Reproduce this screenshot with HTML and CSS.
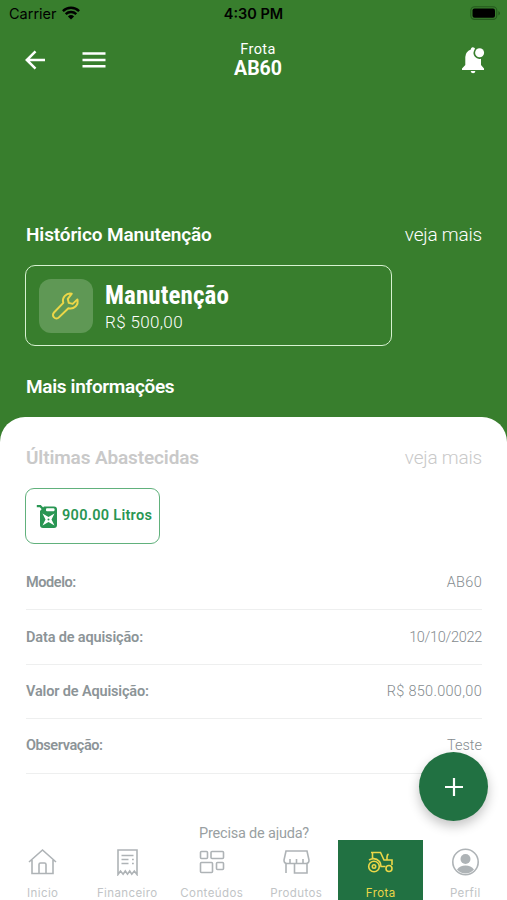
FILE: index.html
```html
<!DOCTYPE html>
<html lang="pt-BR">
<head>
<meta charset="utf-8">
<meta name="viewport" content="width=device-width, initial-scale=1">
<title>Frota AB60</title>
<link rel="stylesheet" href="styles.css">
</head>
<body>
<div class="app">
  <div class="status">
    <div class="carrier"><span>Carrier</span>
      <svg width="18" height="14" viewBox="0 0 18 14"><g fill="none" stroke="#000" stroke-width="2.4"><path d="M.9 5.1a11.6 11.6 0 0 1 16.2 0"/><path d="M3.7 8.2a7.6 7.6 0 0 1 10.6 0"/></g><path d="M9 13.6 5.9 10.400a4.500 4.500 0 0 1 6.200 0Z"/></svg>
    </div>
    <div class="clock">4:30 PM</div>
    <svg class="battery" width="31" height="15" viewBox="0 0 31 15"><rect x=".8" y=".8" width="26" height="12.600" rx="3.800" fill="none" stroke="#245a1d" stroke-width="1.100"/><rect x="2.500" y="2.500" width="22.500" height="9.200" rx="2"/><path d="M28.400 5v4.500q1.600-.6 1.600-2.200t-1.600-2.300Z" fill="#245a1d"/></svg>
  </div>
  <header class="header">
    <div class="left">
      <svg width="22" height="22" viewBox="0 0 22 22" fill="none" stroke="#fff" stroke-width="2.500"><path d="M21 11H3M11.500 2.300 2.800 11l8.700 8.700"/></svg>
      <svg width="24" height="18" viewBox="0 0 24 18" stroke="#fff" stroke-width="2.600"><path d="M.5 2.500h23M.5 9h23M.5 15.300h23"/></svg>
    </div>
    <div class="title"><p class="t-small">Frota</p><p class="t-big">AB60</p></div>
    <svg class="bell" width="24" height="28" viewBox="0 0 24 28" fill="#fff"><path d="M11.500 1.200q-1.700.2-1.700 2.300Q4.500 5.500 4.300 11v8L1 22.500V24h22v-1.500L20 19v-6.300a5.900 5.900 0 0 1-6.900-8.200q.4-1 1-1.700-.6-1.800-2.600-1.600Z"/><circle cx="18.600" cy="6.800" r="4.500"/><path d="M9.700 25h4.700q-.2 2.200-2.300 2.200T9.700 25Z"/></svg>
  </header>
  <section class="history">
    <div class="section-head"><h2>Histórico Manutenção</h2><a class="more">veja mais</a></div>
    <div class="card">
      <div class="tile"><svg width="30" height="30" viewBox="0 0 30 30" fill="none" stroke="#ecd748" stroke-width="2" stroke-linejoin="round"><path d="M20.800 2.700a7.200 7.200 0 0 0-8.500 9.200L3 21.500a3.400 3.400 0 0 0 4.900 4.900l9.500-9.200a7.200 7.200 0 0 0 9-8.800l-4.700 4.500-3.900-1-1-4Z"/></svg></div>
      <div><p class="card-title">Manutenção</p><p class="card-value">R$ 500,00</p></div>
    </div>
    <h2 class="info">Mais informações</h2>
  </section>
  <main class="sheet">
    <div class="section-head muted"><h2>Últimas Abastecidas</h2><a class="more">veja mais</a></div>
    <div class="fuel">
      <svg width="22" height="25" viewBox="0 0 22 25"><path d="M.8 2.200h3.500l4 4" fill="none" stroke="#299653" stroke-width="2.200"/><path d="M8 2.500h10q3 0 3 3V21q0 3-3 3H7q-3 0-3-3V7Z" fill="#299653"/><rect x="10" y="4.300" width="8.500" height="3" rx="1" fill="#fff"/><path d="M6.500 9.500 12.500 13l6-3.500-3 6 3 6-6-3.500-6 3.500 3-6Z" fill="#fff"/><circle cx="12.500" cy="15.500" r="1" fill="#299653"/></svg>
      <span>900.00 Litros</span>
    </div>
    <dl class="rows">
      <div class="row"><dt class="tight">Modelo:</dt><dd class="loose">AB60</dd></div>
      <div class="row"><dt>Data de aquisição:</dt><dd class="tight">10/10/2022</dd></div>
      <div class="row"><dt>Valor de Aquisição:</dt><dd class="loose">R$ 850.000,00</dd></div>
      <div class="row"><dt class="tight">Observação:</dt><dd>Teste</dd></div>
    </dl>
    <p class="help">Precisa de ajuda?</p>
  </main>
  <nav class="tabs">
    <a class="tab"><svg width="30" height="28" viewBox="0 0 30 28"><path d="M2 14 15.500 2 29 14M5 12v13.500h21V12M12 25.500v-9q0-1.500 1.500-1.500h4q1.500 0 1.500 1.500v9"/></svg><span>Inicio</span></a>
    <a class="tab"><svg width="30" height="28" viewBox="0 0 30 28"><path d="M6 26.500V2h19v24.500L22.300 23l-2.500 3.200-2.100-3.200-2.200 3.200-2.200-3.200-2.200 3.200L8.500 23ZM9.500 7.500h12M9.500 11.500h7M9.500 15.500h7M20 11.500h1.800M20 15.500h1.800"/></svg><span>Financeiro</span></a>
    <a class="tab"><svg width="30" height="28" viewBox="0 0 30 28"><rect x="4.500" y="3.500" width="7" height="7" rx="1"/><rect x="15" y="3.500" width="12.500" height="7" rx="1"/><rect x="4.500" y="14.500" width="12" height="10" rx="1"/><rect x="20.500" y="14.500" width="7" height="7" rx="1"/></svg><span>Conteúdos</span></a>
    <a class="tab"><svg width="30" height="28" viewBox="0 0 30 28"><path d="M5 3h21q1 4.500 2 9 0 3.500-3 3.500H6q-3 0-3-3.500 1-4.500 2-9ZM9 11v4.500M15.500 11v4.500M22 11v4.500M5 15.500V25M26 15.500V25H13.500v-9.500"/></svg><span>Produtos</span></a>
    <a class="tab active"><svg width="30" height="28" viewBox="0 0 30 28"><circle cx="9" cy="18.500" r="5.300"/><circle cx="9" cy="18.500" r="1.700"/><circle cx="24" cy="20.500" r="3"/><path d="M4 12q6-3.500 10.500 1.500 1.500 2 1.500 5h4.500M7.500 10.500V4.500h8L19 12h8v5M6 4.500h1.500M22 12V9q0-2 1.500-3"/></svg><span>Frota</span></a>
    <a class="tab"><svg width="30" height="28" viewBox="0 0 30 28"><circle cx="15.500" cy="14" r="12.700"/><g fill="#aeb3b6" stroke="none"><circle cx="15.500" cy="11" r="5"/><path d="M7 21.500q3-4 8.500-4t8.500 4q-3.500 4-8.500 4t-8.500-4Z"/></g></svg><span>Perfil</span></a>
  </nav>
  <button class="fab" aria-label="+"><svg width="18" height="18" viewBox="0 0 18 18" stroke="#fff" stroke-width="2.200"><path d="M0 9h18M9 0v18"/></svg></button>
</div>
</body>
</html>
```
FILE: styles.css
```css
* { box-sizing: border-box; margin: 0; padding: 0; }
body { font-family: Roboto, "Open Sans", sans-serif; background: #387e2d; color: #fff; }
svg { display: block; flex: none; }
.app { position: relative; width: 507px; height: 900px; overflow: hidden; display: flex; flex-direction: column; background: #387e2d; }

.status { height: 28px; display: grid; grid-template-columns: 1fr auto 1fr; align-items: center; padding: 0 6px 0 9px; color: #000; font-family: Inter, sans-serif; font-size: 14.500px; line-height: 26px; }
.carrier { display: flex; align-items: center; gap: 6px; }
.carrier svg, .battery { margin-top: -2px; }
.carrier svg { margin-left: -1px; }
.clock { font-weight: 600; font-size: 14.500px; margin-left: -3px; }
.battery { justify-self: end; }

.header { height: 64px; display: grid; grid-template-columns: 1fr auto 1fr; align-items: center; padding: 0 22px 0 24px; }
.left { display: flex; align-items: center; gap: 36px; }
.title { text-align: center; padding-left: 7px; }
.t-small { font-size: 14.500px; line-height: 16px; letter-spacing: .4px; }
.t-big { font-size: 19.500px; line-height: 21px; font-weight: 700; }
.bell { justify-self: end; }

.history { height: 325px; padding: 128px 25px 0 26px; }
.section-head { display: flex; justify-content: space-between; align-items: center; height: 28px; }
h2 { font-size: 19px; font-weight: 600; line-height: 28px; letter-spacing: -.13px; padding-top: 1px; }
h2.info { letter-spacing: -.33px; }
.more { font-size: 19px; font-weight: 300; letter-spacing: -.2px; }
.card { width: 367px; height: 81px; margin: 17px 0 26px -1px; border: 1.500px solid #d7f2d1; border-radius: 10px; padding: 0 13px; display: flex; align-items: center; gap: 12px; }
.tile { width: 54px; height: 54px; border-radius: 12px; background: #5f9855; display: grid; place-items: center; }
.card-title { font-size: 25px; line-height: 30px; font-weight: 700; font-stretch: 75%; letter-spacing: .1px; padding-top: 3px; }
.card-value { font-size: 17px; line-height: 23px; font-weight: 300; letter-spacing: .35px; }

.sheet { flex: 1; background: #fff; border-radius: 25px 25px 0 0; padding: 26px 25px 0 26px; color: #999fa2; }
.muted h2, .muted .more { color: #c9c9c9; }
.fuel { width: 135px; height: 56px; margin: 17px 0 12px -1px; border: 1.500px solid #61b17c; border-radius: 9px; color: #299653; display: flex; align-items: center; gap: 4px; padding-left: 10px; font-size: 14.500px; font-weight: 600; letter-spacing: .3px; white-space: nowrap; }
.fuel span { margin-top: -2px; }
.row { display: flex; justify-content: space-between; align-items: center; height: 54.400px; border-bottom: 1px solid #eeefef; font-size: 14.500px; }
.row dt { font-weight: 600; color: #8c9497; letter-spacing: -.15px; }
.row dd { font-weight: 300; color: #858c8f; }
.row dt.tight { letter-spacing: -.42px; }
.row dd.tight { letter-spacing: -.3px; }
.row dd.loose { letter-spacing: .3px; }
.help { text-align: center; margin-top: 50px; font-size: 14.500px; line-height: 20px; letter-spacing: -.2px; }

.tabs { position: absolute; left: 0; right: 0; bottom: 0; height: 60px; display: grid; grid-template-columns: repeat(6, 1fr); background: #fff; }
.tab { display: flex; flex-direction: column; align-items: center; padding-top: 8px; color: #c1c4c6; font-family: Inter, sans-serif; font-size: 11.500px; letter-spacing: .4px; }
.tab span { line-height: 18px; margin: 8px 0 0 1px; }
.tab svg { fill: none; stroke: #aeb3b6; stroke-width: 1.600; }
.tab.active { background: #217142; color: #ecd748; }
.tab.active svg { stroke: #ecd748; }

.fab { position: absolute; left: 419px; top: 752px; width: 69px; height: 69px; border: 0; border-radius: 50%; background: #217142; display: grid; place-items: center; box-shadow: 0 5px 12px #0000003d; }
```
